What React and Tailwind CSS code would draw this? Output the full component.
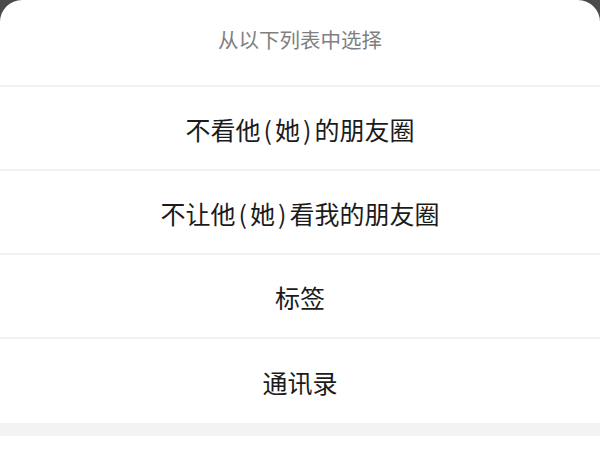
export default function App() {
  const rows = [
    ["不看他", "她", "的朋友圈"],
    ["不让他", "她", "看我的朋友圈"],
    ["标签"],
    ["通讯录"],
  ];
  const font = { fontFamily: '"Noto Sans CJK SC", "Noto Sans", sans-serif' };
  return (
    <div className="w-[600px] h-[450px] bg-[#4a4a4a] overflow-hidden" style={font}>
      <div className="h-full bg-white rounded-t-[22px] flex flex-col">
        <div className="h-[87px] flex items-center justify-center pb-[6px] text-[20.5px] text-[#808080] border-b-2 border-[#f2f2f2]">
          从以下列表中选择
        </div>
        {rows.map((r, i) => (
          <div
            key={i}
            className={`h-[84px] flex items-center justify-center pt-[4px] text-[25px] text-[#1b1b1b] ${i < 3 ? "border-b-2 border-[#f2f2f2]" : ""}`}
          >
            {r.length === 1 ? (
              r[0]
            ) : (
              <span>
                {r[0]}
                <span className="px-[3px]">(</span>
                {r[1]}
                <span className="px-[3px]">)</span>
                {r[2]}
              </span>
            )}
          </div>
        ))}
        <div className="h-[13px] bg-[#f3f3f3]" />
        <div className="flex-1 bg-white" />
      </div>
    </div>
  );
}
